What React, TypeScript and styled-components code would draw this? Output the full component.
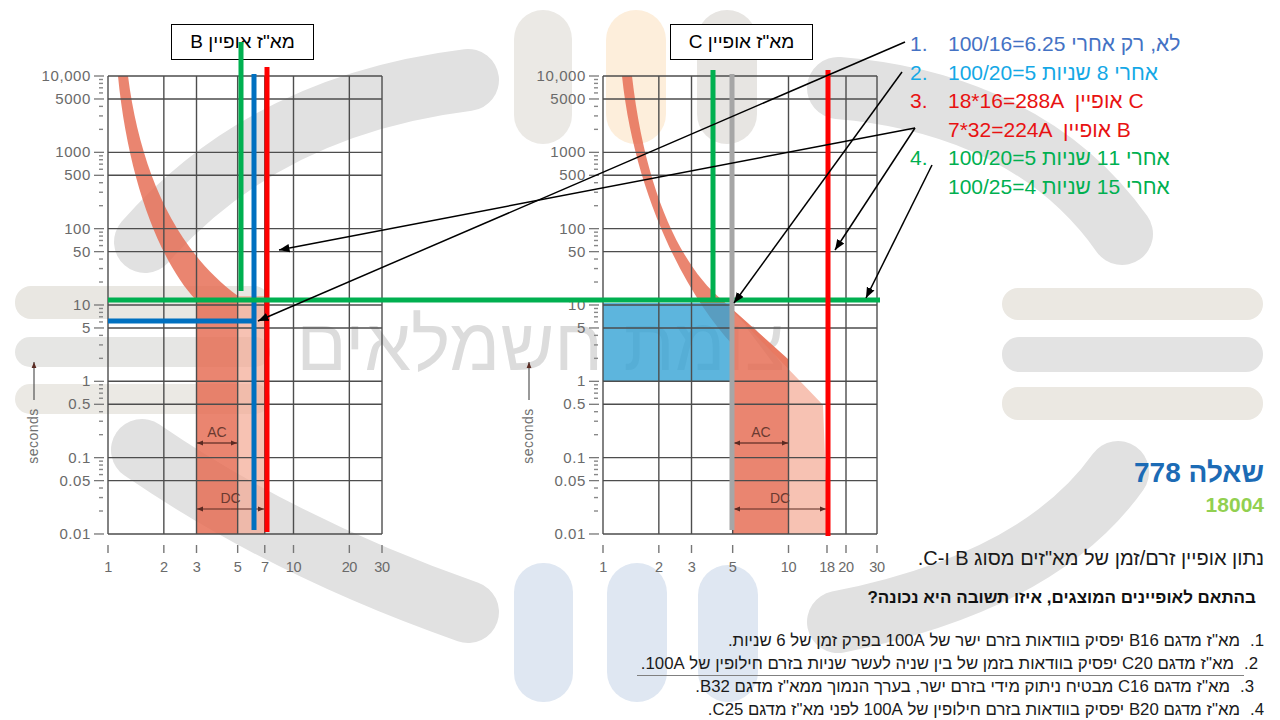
import React from "react";
import styled, { createGlobalStyle, css } from "styled-components";

const FONT = `"Liberation Sans", Arial, sans-serif`;
const GREEN = "#00b050";
const BLUE = "#0070c0";
const RED = "#ff0000";
const GRAY = "#a6a6a6";

const GlobalStyle = createGlobalStyle`
  html, body { margin: 0; padding: 0; background: #fff; }
  body { font-family: ${FONT}; }
`;

const Slide = styled.div`
  position: relative;
  width: 1280px;
  height: 720px;
  overflow: hidden;
  background: #fff;
  display: grid;
  grid-template-columns: 895px 1fr;
  grid-template-rows: 580px 1fr;
`;

const Watermark = styled.svg`
  position: absolute;
  inset: 0;
  z-index: 0;
`;

const Overlay = styled.svg`
  position: absolute;
  inset: 0;
  z-index: 3;
  pointer-events: none;
`;

const ChartsRow = styled.div`
  position: relative;
  z-index: 1;
  display: flex;
  gap: 115px;
  padding: 24px 0 0 20px;
`;

const ChartPanel = styled.div`
  display: flex;
  flex-direction: column;
  width: 380px;
`;

const LabelBox = styled.div<{ $offset: number }>`
  margin-left: ${(p) => p.$offset}px;
  width: 143px;
  height: 36px;
  box-sizing: border-box;
  border: 1px solid #000;
  background: #fff;
  display: flex;
  align-items: center;
  justify-content: center;
  direction: rtl;
  font-size: 19px;
  color: #000;
`;

const ChartSvg = styled.svg`
  display: block;
  margin-top: 4px;
  overflow: visible;
`;

const SidePanel = styled.div`
  position: relative;
  z-index: 1;
  display: flex;
  flex-direction: column;
  justify-content: space-between;
  padding: 30px 16px 10px 15px;
`;

const Legend = styled.ol`
  list-style: none;
  margin: 0;
  padding: 0;
  font-size: 21px;
  line-height: 28.5px;
`;

const LegendRow = styled.li<{ $color: string }>`
  display: flex;
  color: ${(p) => p.$color};
  white-space: pre;
`;

const LegendNum = styled.span`
  flex: none;
  width: 38px;
`;

const QuestionHead = styled.div`
  direction: rtl;
  display: flex;
  flex-direction: column;
  align-items: flex-start;
`;

const Title = styled.h1`
  margin: 0;
  font-size: 28px;
  line-height: 34px;
  font-weight: bold;
  color: #1c6bb5;
`;

const Code = styled.div`
  margin-top: 2px;
  font-size: 21px;
  line-height: 26px;
  font-weight: bold;
  color: #92d050;
`;

const Intro = styled.p`
  margin: 28px 0 0;
  font-size: 20px;
  line-height: 24px;
  color: #1a1a1a;
`;

const QuestionBody = styled.div`
  grid-column: 1 / -1;
  position: relative;
  z-index: 1;
  direction: rtl;
  padding: 8px 16px 0 0;
`;

const Prompt = styled.p`
  margin: 0 8px 0 0;
  font-size: 17px;
  line-height: 20px;
  font-weight: bold;
  color: #111;
`;

const Answers = styled.ol`
  list-style: none;
  margin: 22px 0 0;
  padding: 0;
  font-size: 16.8px;
  line-height: 22.7px;
  color: #1a1a1a;
`;

const Answer = styled.li<{ $inset: number }>`
  display: flex;
  padding-right: ${(p) => p.$inset}px;
`;

const AnswerNum = styled.span`
  margin-left: 10px;
`;

const AnswerText = styled.span<{ $marked?: boolean }>`
  ${(p) =>
    p.$marked &&
    css`
      border-bottom: 1.5px solid #808080;
      padding-inline: 10px 4px;
      margin-inline: -10px -4px;
    `}
`;

/* ---------- chart drawing ---------- */

const DEC = 76.33;
const yOf = (v: number) => 12 + (4 - Math.log10(v)) * DEC;
const xOf = (v: number) => 88 + Math.log10(v) * 185.5;
const X0 = 88;
const X1 = 362;
const Y0 = 12;
const Y1 = 470;

const Y_LABELS: [number, string][] = [
  [10000, "10,000"],
  [5000, "5000"],
  [1000, "1000"],
  [500, "500"],
  [100, "100"],
  [50, "50"],
  [10, "10"],
  [5, "5"],
  [1, "1"],
  [0.5, "0.5"],
  [0.1, "0.1"],
  [0.05, "0.05"],
  [0.01, "0.01"],
];

const MINOR: number[] = [];
for (let k = -2; k < 4; k++) {
  for (let m = 2; m <= 9; m++) {
    if (m !== 5) MINOR.push(m * Math.pow(10, k));
  }
}

type ChartSpec = {
  id: string;
  ticks: { label: string; x: number }[];
  dark: string;
  light: string;
  band?: boolean;
  ac: [number, number];
  dc: [number, number];
};

const CHART_B: ChartSpec = {
  id: "b",
  ticks: [1, 2, 3, 5, 7, 10, 20, 30].map((v) => ({ label: String(v), x: xOf(v) })),
  dark: "M98,12 L108,12 C120,106 155,186 218,232 L218,470 L176,470 L176,236 C140,198 108,116 98,12 Z",
  light: "M218,232 L245,232 L245,470 L218,470 Z",
  ac: [177, 217],
  dc: [177, 244],
};

const CHART_C: ChartSpec = {
  id: "c",
  ticks: [
    ...[1, 2, 3, 5, 10].map((v) => ({ label: String(v), x: xOf(v) })),
    { label: "18", x: 312 },
    { label: "20", x: 331 },
    { label: "30", x: xOf(30) },
  ],
  dark: "M107,12 L117,12 C130,126 165,201 207,236 L274,296 L274,470 L218,470 L218,281 C175,236 120,136 107,12 Z",
  light: "M207,236 L308,341 L313,470 L274,470 L274,296 Z",
  band: true,
  ac: [219, 273],
  dc: [219, 311],
};

function Chart({ spec }: { spec: ChartSpec }) {
  const tip = `tip-${spec.id}`;
  const acMid = (spec.ac[0] + spec.ac[1]) / 2;
  const dcMid = (spec.dc[0] + spec.dc[1]) / 2;
  return (
    <ChartSvg width={380} height={516} viewBox="0 0 380 516" fontFamily={FONT}>
      <defs>
        <marker id={tip} viewBox="0 0 10 10" refX="10" refY="5" markerWidth="5" markerHeight="5" orient="auto-start-reverse">
          <path d="M0,1 L10,5 L0,9 z" fill="#5a2a22" />
        </marker>
      </defs>
      <path d={spec.light} fill="#f3a893" opacity={0.7} />
      <path d={spec.dark} fill="#e56a50" opacity={0.82} />
      {spec.band && <rect x={88} y={239} width={130} height={78} fill="#35a2d5" opacity={0.8} />}

      {Y_LABELS.map(([v]) => (
        <line key={`h${v}`} x1={X0} x2={X1} y1={yOf(v)} y2={yOf(v)} stroke="#4d4d4d" strokeWidth={1.4} />
      ))}
      {spec.ticks.map((t) => (
        <line key={`v${t.label}`} x1={t.x} x2={t.x} y1={Y0} y2={Y1} stroke="#4d4d4d" strokeWidth={1.4} />
      ))}

      {Y_LABELS.map(([v, label]) => (
        <g key={`yl${v}`}>
          <line x1={74} x2={84} y1={yOf(v)} y2={yOf(v)} stroke="#777" strokeWidth={1.3} />
          <text x={71} y={yOf(v) + 5} textAnchor="end" fontSize={15} letterSpacing={0.6} fill="#6a6a6a">
            {label}
          </text>
        </g>
      ))}
      {MINOR.map((v) => (
        <line key={`m${v}`} x1={79} x2={83} y1={yOf(v)} y2={yOf(v)} stroke="#888" strokeWidth={1.4} />
      ))}

      {spec.ticks.map((t) => (
        <g key={`xl${t.label}`}>
          <line x1={t.x} x2={t.x} y1={481} y2={489} stroke="#777" strokeWidth={1.4} />
          <text x={t.x} y={508} textAnchor="middle" fontSize={14.5} letterSpacing={-0.4} fill="#6a6a6a">
            {t.label}
          </text>
        </g>
      ))}

      <text x={acMid} y={373} textAnchor="middle" fontSize={14} fill="#6b3a30">AC</text>
      <line x1={acMid} x2={spec.ac[0]} y1={379} y2={379} stroke="#5a2a22" strokeWidth={1.2} markerEnd={`url(#${tip})`} />
      <line x1={acMid} x2={spec.ac[1]} y1={379} y2={379} stroke="#5a2a22" strokeWidth={1.2} markerEnd={`url(#${tip})`} />
      <text x={dcMid} y={439} textAnchor="middle" fontSize={14} fill="#6b3a30">DC</text>
      <line x1={dcMid} x2={spec.dc[0]} y1={445} y2={445} stroke="#5a2a22" strokeWidth={1.2} markerEnd={`url(#${tip})`} />
      <line x1={dcMid} x2={spec.dc[1]} y1={445} y2={445} stroke="#5a2a22" strokeWidth={1.2} markerEnd={`url(#${tip})`} />

      <text transform="translate(18,372) rotate(-90)" textAnchor="middle" fontSize={14} letterSpacing={0.5} fill="#707070">
        seconds
      </text>
      <line x1={14} x2={14} y1={336} y2={298} stroke="#555" strokeWidth={1.2} markerEnd={`url(#${tip})`} />
    </ChartSvg>
  );
}

/* ---------- overlay annotations ---------- */

const BARS = [
  { x1: 241, y1: 42, x2: 241, y2: 291, c: GREEN },
  { x1: 254, y1: 74, x2: 254, y2: 530, c: BLUE },
  { x1: 267, y1: 67, x2: 267, y2: 532, c: RED },
  { x1: 108, y1: 321, x2: 256, y2: 321, c: BLUE },
  { x1: 108, y1: 300, x2: 880, y2: 300, c: GREEN },
  { x1: 713, y1: 70, x2: 713, y2: 300, c: GREEN },
  { x1: 732, y1: 74, x2: 732, y2: 530, c: GRAY },
  { x1: 828, y1: 70, x2: 828, y2: 536, c: RED },
];

const ARROWS = [
  [905, 42, 258, 321],
  [902, 72, 734, 303],
  [915, 128, 279, 250],
  [915, 128, 835, 250],
  [932, 165, 866, 298],
];

const LEGEND = [
  { n: "1.", t: "100/16=6.25 לא, רק אחרי", c: "#4472c4" },
  { n: "2.", t: "100/20=5 אחרי 8 שניות", c: "#14a8e6" },
  { n: "3.", t: "18*16=288A  אופיין C", c: "#e81212" },
  { n: "", t: "7*32=224A  אופיין B", c: "#e81212" },
  { n: "4.", t: "100/20=5 אחרי 11 שניות", c: GREEN },
  { n: "", t: "100/25=4 אחרי 15 שניות", c: GREEN },
];

const ANSWERS = [
  { t: "מא\"ז מדגם B16 יפסיק בוודאות בזרם ישר של 100A בפרק זמן של 6 שניות.", inset: 0 },
  { t: "מא\"ז מדגם C20 יפסיק בוודאות בזמן של בין שניה לעשר שניות בזרם חילופין של 100A.", inset: 6, marked: true },
  { t: "מא\"ז מדגם C16 מבטיח ניתוק מידי בזרם ישר, בערך הנמוך ממא\"ז מדגם B32.", inset: 10 },
  { t: "מא\"ז מדגם B20 יפסיק בוודאות בזרם חילופין של 100A לפני מא\"ז מדגם C25.", inset: 0 },
];

function Logo() {
  return (
    <Watermark width={1280} height={720} viewBox="0 0 1280 720">
      <g fill="none" stroke="#e1e1e1" strokeWidth={62} strokeLinecap="round">
        <path d="M145 242 Q 265 105 468 80" />
        <path d="M838 88 C 925 95, 1045 125, 1122 234" />
        <path d="M142 450 Q 285 548 468 612" />
        <path d="M1118 472 Q 1040 582 838 622" />
      </g>
      <rect x={514} y={10} width={58} height={134} rx={29} fill="#ebe9e5" />
      <rect x={606} y={10} width={60} height={134} rx={30} fill="#fdeedb" />
      <rect x={697} y={10} width={60} height={134} rx={30} fill="#e7e5e2" />
      <rect x={514} y={563} width={59} height={139} rx={29} fill="#dfe7f2" />
      <rect x={607} y={563} width={60} height={139} rx={30} fill="#dfe7f2" />
      <rect x={698} y={565} width={60} height={137} rx={30} fill="#dfe7f2" />
      <rect x={15} y={286} width={255} height={33} rx={16} fill="#e9e7e2" />
      <rect x={15} y={337} width={255} height={30} rx={15} fill="#e6e6e4" />
      <rect x={15} y={384} width={255} height={30} rx={15} fill="#ebe9e4" />
      <rect x={1002} y={288} width={261} height={32} rx={16} fill="#ebe8e2" />
      <rect x={1002} y={337} width={261} height={35} rx={17} fill="#e3e3e3" />
      <rect x={1002} y={387} width={261} height={33} rx={16} fill="#ebe8e2" />
      <text x={785} y={370} textAnchor="end" fontSize={74} fill="#dcdcdc" fontFamily={FONT}>
        צומת חשמלאים
      </text>
    </Watermark>
  );
}

export default function App() {
  return (
    <>
      <GlobalStyle />
      <Slide>
        <Logo />

        <ChartsRow>
          <ChartPanel>
            <LabelBox $offset={151}>מא"ז אופיין B</LabelBox>
            <Chart spec={CHART_B} />
          </ChartPanel>
          <ChartPanel>
            <LabelBox $offset={155}>מא"ז אופיין C</LabelBox>
            <Chart spec={CHART_C} />
          </ChartPanel>
        </ChartsRow>

        <SidePanel>
          <Legend>
            {LEGEND.map((row, i) => (
              <LegendRow key={i} $color={row.c}>
                <LegendNum>{row.n}</LegendNum>
                <span>{row.t}</span>
              </LegendRow>
            ))}
          </Legend>
          <QuestionHead>
            <Title>שאלה 778</Title>
            <Code>18004</Code>
            <Intro>נתון אופיין זרם/זמן של מא"זים מסוג B ו-C.</Intro>
          </QuestionHead>
        </SidePanel>

        <QuestionBody>
          <Prompt>בהתאם לאופיינים המוצגים, איזו תשובה היא נכונה?</Prompt>
          <Answers>
            {ANSWERS.map((a, i) => (
              <Answer key={i} $inset={a.inset}>
                <AnswerNum>{i + 1}.</AnswerNum>
                <AnswerText $marked={a.marked}>{a.t}</AnswerText>
              </Answer>
            ))}
          </Answers>
        </QuestionBody>

        <Overlay width={1280} height={720} viewBox="0 0 1280 720">
          <defs>
            <marker id="arrowhead" viewBox="0 0 10 10" refX="10" refY="5" markerWidth="7" markerHeight="7" orient="auto">
              <path d="M0,1 L10,5 L0,9 z" fill="#000" />
            </marker>
          </defs>
          {BARS.map((b, i) => (
            <line key={i} x1={b.x1} y1={b.y1} x2={b.x2} y2={b.y2} stroke={b.c} strokeWidth={5} />
          ))}
          {ARROWS.map(([x1, y1, x2, y2], i) => (
            <line key={i} x1={x1} y1={y1} x2={x2} y2={y2} stroke="#000" strokeWidth={1.5} markerEnd="url(#arrowhead)" />
          ))}
        </Overlay>
      </Slide>
    </>
  );
}
